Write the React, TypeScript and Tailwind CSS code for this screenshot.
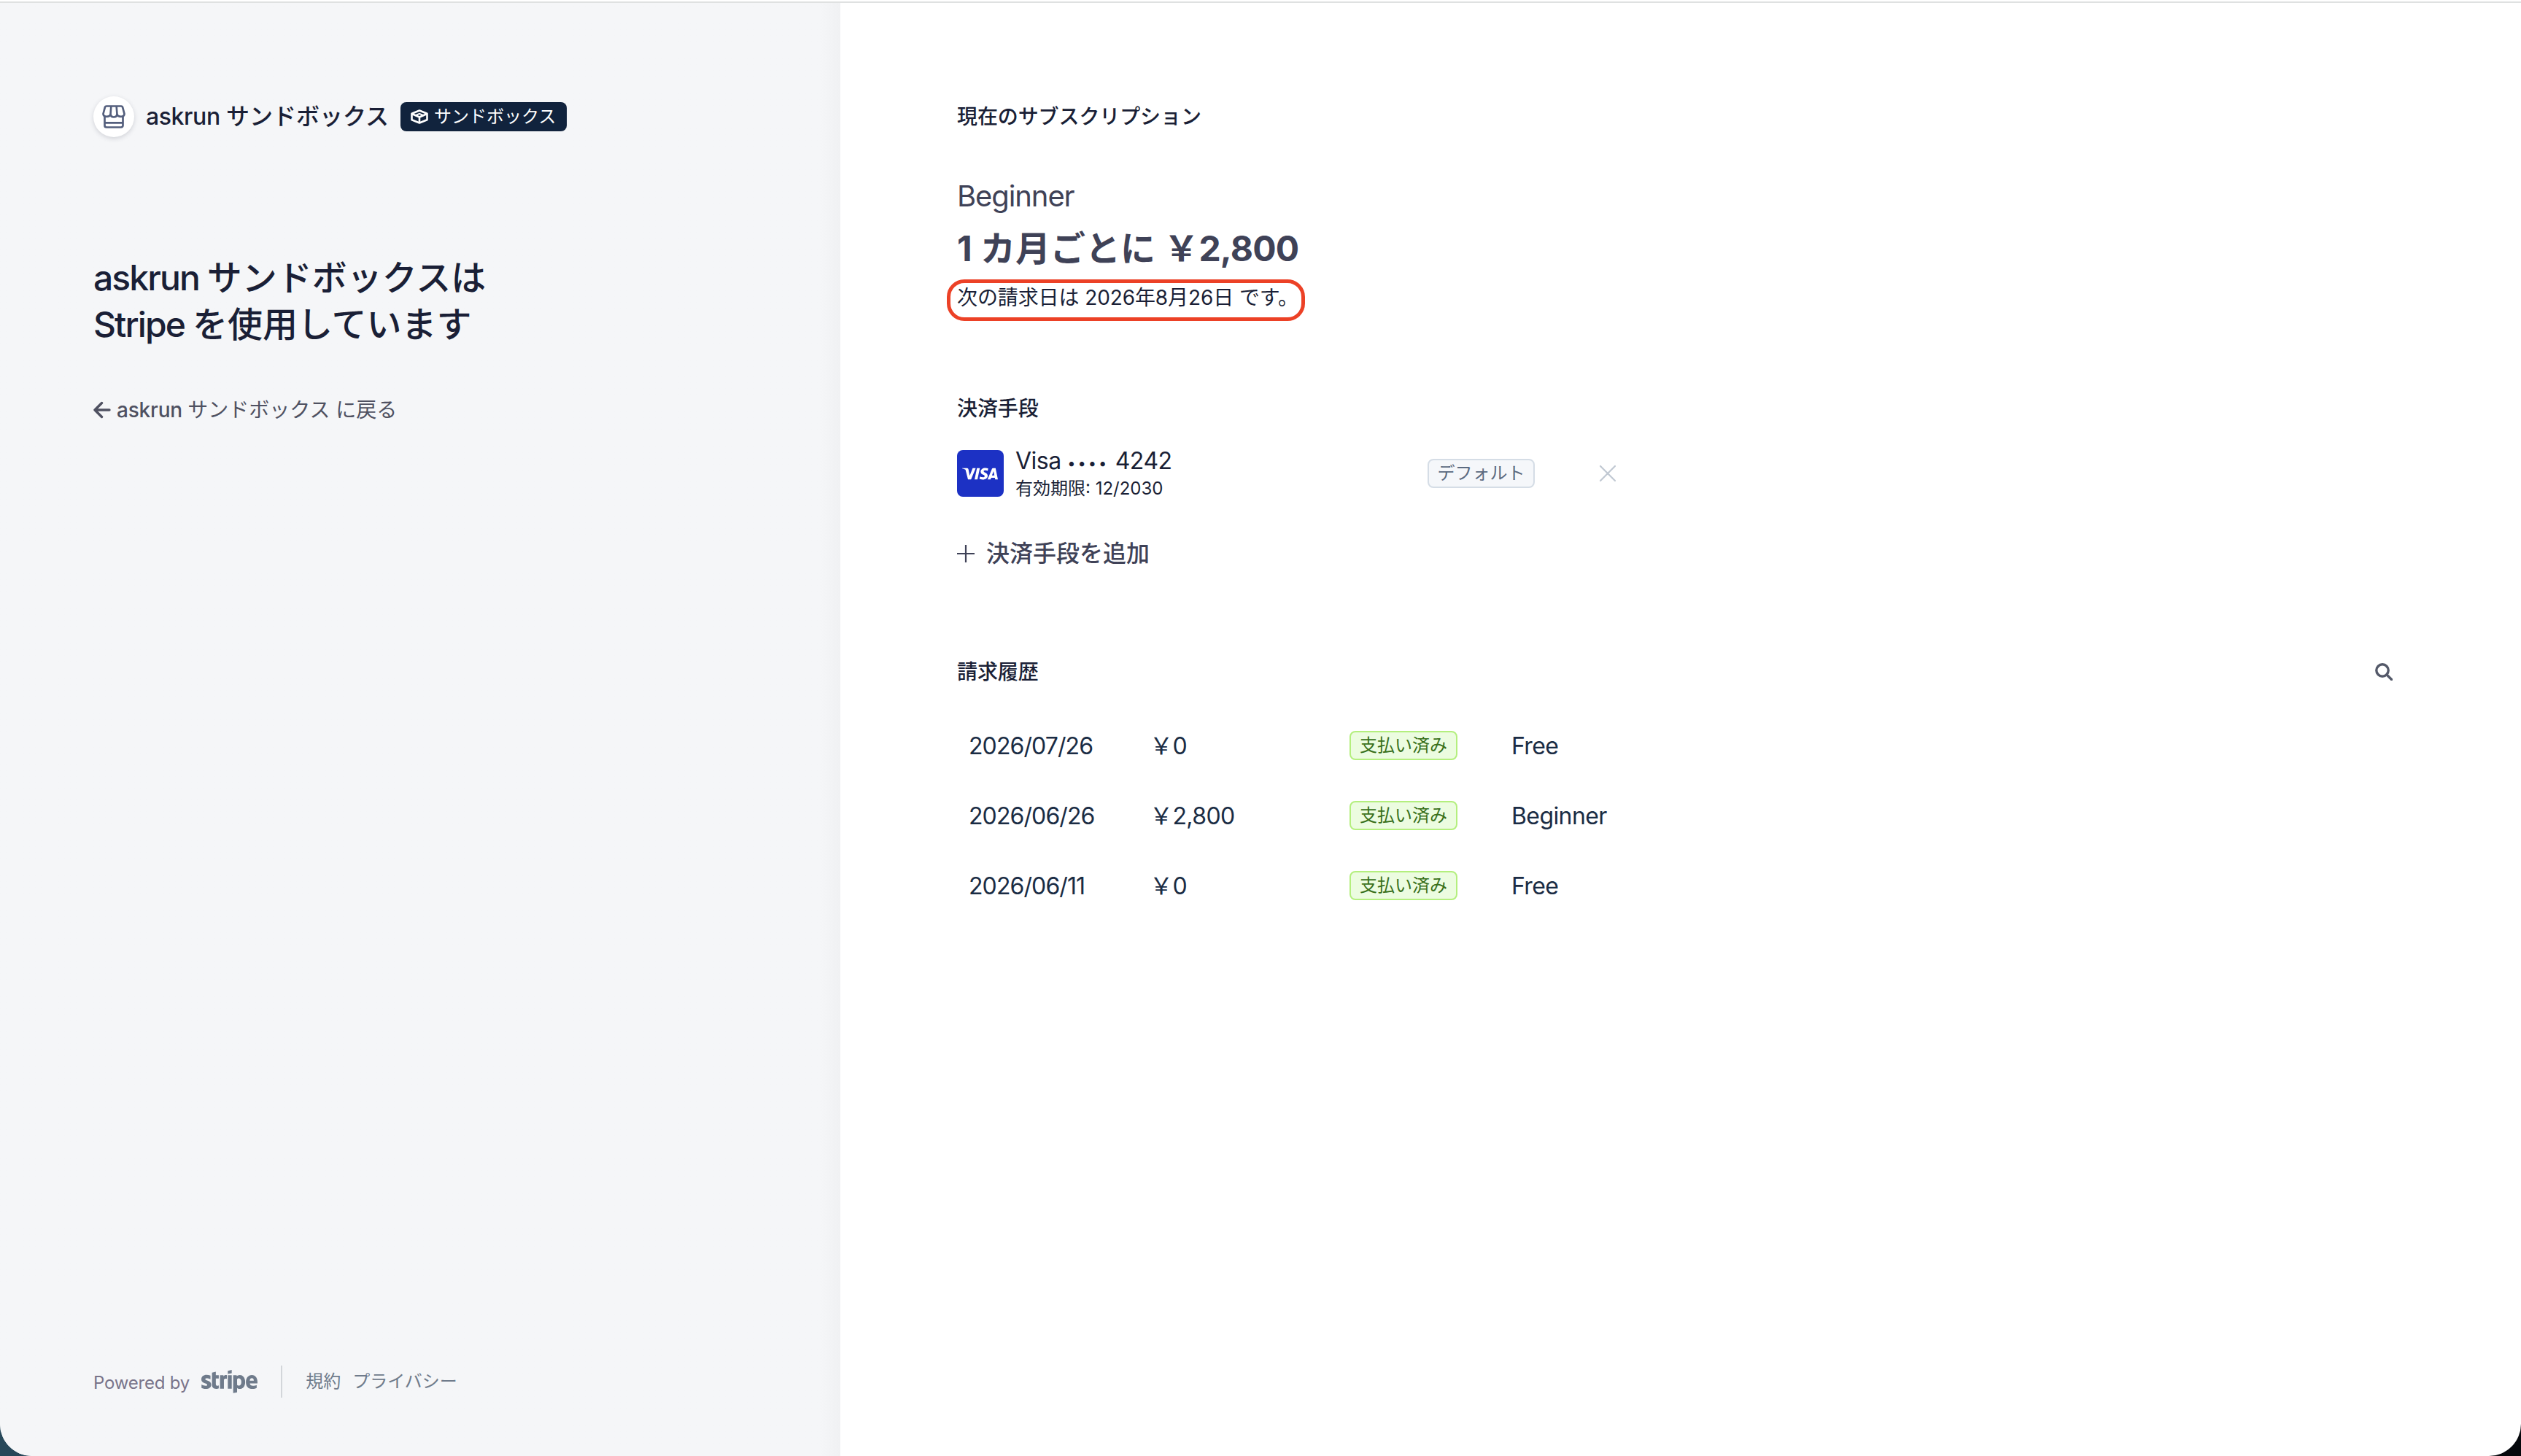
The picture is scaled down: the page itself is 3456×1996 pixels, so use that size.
import type { ReactNode } from "react";
import { FaStripe } from "react-icons/fa";
import { SiVisa } from "react-icons/si";

type Invoice = {
  date: string;
  amount: string;
  status: string;
  plan: string;
};

const invoices: Invoice[] = [
  { date: "2026/07/26", amount: "￥0", status: "支払い済み", plan: "Free" },
  { date: "2026/06/26", amount: "￥2,800", status: "支払い済み", plan: "Beginner" },
  { date: "2026/06/11", amount: "￥0", status: "支払い済み", plan: "Free" },
];

function StoreIcon() {
  return (
    <svg viewBox="0 0 32 32" className="size-8" fill="none" stroke="#545f7d" strokeWidth="2.700" strokeLinejoin="round">
      <path d="M6 1.500h20q1.700 0 2.200 1.800L30.500 12q0 3.800-4.500 3.800T20.500 13q-.5 3.500-4.500 3.500T11.500 13q-1 2.800-5.500 2.800T1.500 12l2.300-8.700Q4.300 1.500 6 1.500z" />
      <path d="M12.300 2 11.500 13M19.700 2 20.500 13" />
      <path d="M3.500 16v12a2.500 2.500 0 0 0 2.500 2.500h20a2.500 2.500 0 0 0 2.500-2.500V16M3.500 24.300h25" />
    </svg>
  );
}

function BoxIcon() {
  return (
    <svg viewBox="0 0 24 20" className="h-5 w-6" fill="none" stroke="white" strokeWidth="2.600" strokeLinejoin="round">
      <path d="M12 1.500 22.500 5.800v8.400L12 18.500 1.500 14.200V5.800z" />
      <path d="M2 6.200l10 4.300 10-4.300M12 10.500v8" />
      <path strokeWidth="2" d="M6.500 8.200 12 5.800l5.500 2.400L12 10.600z" />
    </svg>
  );
}

function SectionTitle({ children }: { children: ReactNode }) {
  return <h2 className="text-[28px] leading-10 font-medium tracking-[-0.100px] text-[#1a1f36]">{children}</h2>;
}

function Sidebar() {
  return (
    <aside className="flex w-[1152px] shrink-0 flex-col bg-linear-to-l from-[#f0f1f3] to-[#f5f6f8] to-[28px] px-32 pt-[124px] pb-[78px]">
      <div className="flex h-16 items-center">
        <div className="flex size-14 items-center justify-center rounded-full bg-white shadow-[0_2px_6px_rgba(60,66,87,0.2)]">
          <StoreIcon />
        </div>
        <span className="ml-4 text-[32px] font-medium whitespace-nowrap text-[#1a1f36]">
          <span className="tracking-[-0.400px]">askrun </span>サンドボックス
        </span>
        <span className="ml-4 flex h-10 w-[228px] items-center gap-2 rounded-lg bg-[#11233d] pl-3.5 text-2xl whitespace-nowrap text-white">
          <BoxIcon />
          サンドボックス
        </span>
      </div>

      <h1 className="mt-[157px] text-5xl leading-16 font-medium text-[#1a1f36]">
        <span className="tracking-[-1.900px]">askrun </span>サンドボックスは
        <br />
        <span className="tracking-[-1.900px]">Stripe </span>を使用しています
      </h1>

      <a className="mt-[65px] flex h-10 items-center gap-2 text-[28px] text-[#4f5161]">
        <svg viewBox="0 0 24 24" className="size-6" fill="none" stroke="currentColor" strokeWidth="3.400" strokeLinecap="round" strokeLinejoin="round">
          <path d="M22 12H2.500M11.500 2.500 2 12l9.500 9.500" />
        </svg>
        <span>
          <span className="font-medium tracking-[-0.200px]">askrun </span>サンドボックス に戻る
        </span>
      </a>

      <footer className="mt-auto flex h-12 items-center text-2xl text-[#6f7b8b]">
        <span className="pt-1 tracking-[-0.200px] text-[#79748a]">Powered by</span>
        <FaStripe className="ml-4 h-[62px] w-[77px]" />
        <span className="ml-8 h-11 w-0.5 bg-[#d3d6da]" />
        <span className="ml-8">規約</span>
        <span className="ml-4">プライバシー</span>
      </footer>
    </aside>
  );
}

function CurrentPlan() {
  return (
    <section>
      <SectionTitle>現在のサブスクリプション</SectionTitle>
      <p className="mt-[61px] text-[40px] leading-14 tracking-[-1.100px] text-[#3f4257]">Beginner</p>
      <p className="mt-3 text-5xl leading-16 font-bold text-[#3f4257]">
        1 カ月ごとに ￥<span className="tracking-[-0.800px]">2,800</span>
      </p>
      <div className="mt-2.5 -ml-3.5 flex h-[57px] w-[491px] items-start rounded-[24px] border-5 border-[#ec4126] pl-[9px] text-[28px] leading-10 tracking-[-0.100px] whitespace-nowrap text-[#1a1f36]">
        次の請求日は 2026年8月26日 です。
      </div>
    </section>
  );
}

function PaymentMethods() {
  return (
    <section className="mt-[100px]">
      <SectionTitle>決済手段</SectionTitle>
      <div className="mt-[37px] flex h-16 items-center">
        <div className="flex size-16 items-center justify-center rounded-lg bg-[#1c31c4] pr-0.5 text-white">
          <SiVisa className="size-[49px]" />
        </div>
        <div className="ml-4 w-[565px] text-[#1a1f36]">
          <div className="text-[32px] leading-10 tracking-[-0.500px]">
            Visa <span className="align-[1px] text-[20px] tracking-[3px]">••••</span> 4242
          </div>
          <div className="-mt-px text-2xl leading-8">有効期限: 12/2030</div>
        </div>
        <span className="flex h-10 w-[147px] items-center justify-center rounded-lg border-2 border-[#d5dde6] bg-[#f5f7fa] text-2xl text-[#5b6a80]">
          デフォルト
        </span>
        <svg viewBox="0 0 24 24" className="ml-[88px] size-6" stroke="#c0c8d2" strokeWidth="2.200" strokeLinecap="round">
          <path d="M2 2l20 20M22 2 2 22" />
        </svg>
      </div>
      <button className="mt-[54px] flex h-12 items-center gap-4 text-[32px] font-medium text-[#3f4257]">
        <svg viewBox="0 0 24 24" className="size-6" stroke="currentColor" strokeWidth="2.200">
          <path d="M12 0v24M0 12h24" />
        </svg>
        決済手段を追加
      </button>
    </section>
  );
}

function BillingHistory() {
  return (
    <section className="mt-[118px]">
      <div className="flex items-center justify-between">
        <SectionTitle>請求履歴</SectionTitle>
        <svg viewBox="0 0 24 24" className="size-6" fill="none" stroke="#545969" strokeWidth="3.400" strokeLinecap="round">
          <circle cx="10" cy="10" r="8.200" />
          <path d="m16.500 16.500 6 6" />
        </svg>
      </div>
      <div className="mt-[33px]">
        {invoices.map((invoice) => (
          <div
            key={invoice.date}
            className="grid h-24 grid-cols-[248px_274px_222px_1fr] items-center pl-4 text-[32px] tracking-[-0.600px] text-[#1a2c44]"
          >
            <span className="pt-0.5 tracking-[-0.900px]">{invoice.date}</span>
            <span className="pt-0.5">{invoice.amount}</span>
            <span className="flex h-10 w-[148px] items-center justify-center rounded-lg border-2 border-[#b4ef7e] bg-[#ecfce0] text-2xl tracking-normal text-[#38701a]">
              {invoice.status}
            </span>
            <span className="pt-0.5">{invoice.plan}</span>
          </div>
        ))}
      </div>
    </section>
  );
}

export default function App() {
  return (
    <div className="h-[1996px] w-[3456px] bg-linear-to-r from-[#28485a] to-[#05080c]">
      <div className="flex h-full flex-col overflow-hidden rounded-b-[44px] bg-white pt-0.5 font-['Inter','Noto_Sans_CJK_JP',sans-serif]">
        <div className="h-0.5 shrink-0 bg-[#dfe1e1]" />
        <div className="flex min-h-0 flex-1">
          <Sidebar />
          <main className="flex-1 pt-[136px] pr-44 pl-40">
            <CurrentPlan />
            <PaymentMethods />
            <BillingHistory />
          </main>
        </div>
      </div>
    </div>
  );
}
